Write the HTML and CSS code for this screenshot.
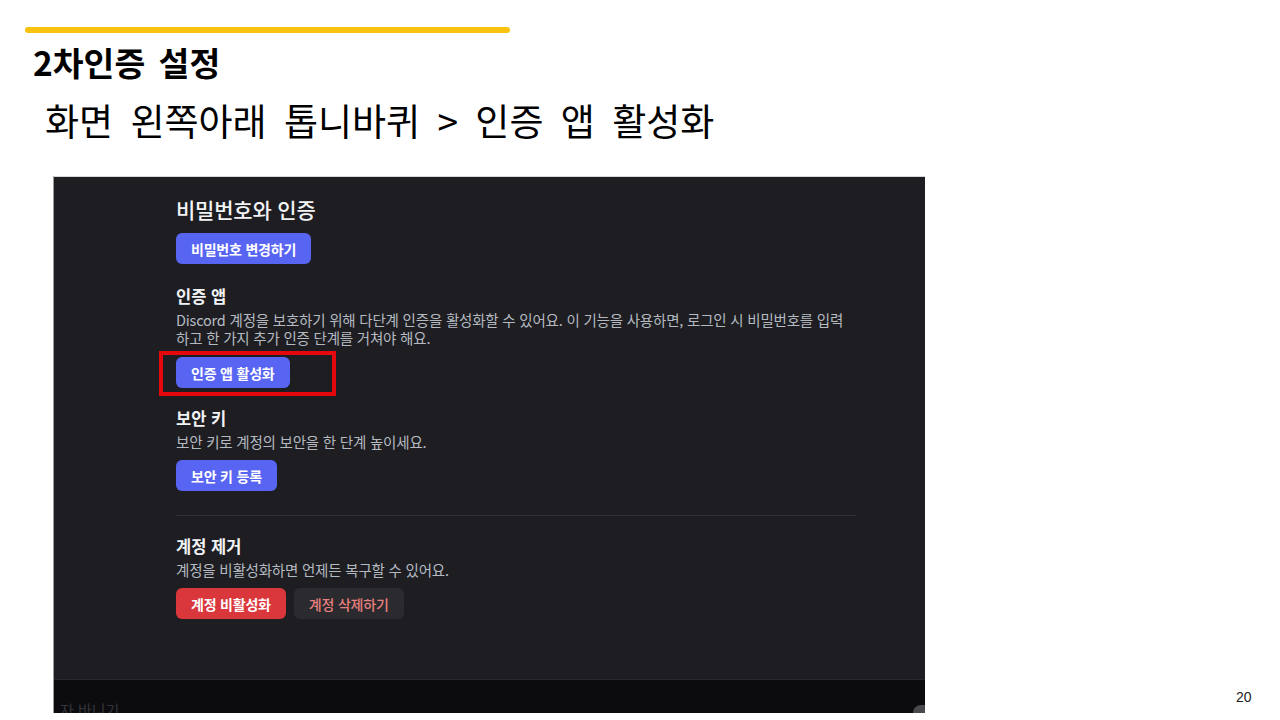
FILE: index.html
```html
<!DOCTYPE html>
<html lang="ko">
<head>
    <meta charset="UTF-8">
    <meta name="viewport" content="width=device-width, initial-scale=1.0">
    <title>2차인증 설정</title>
    <link rel="stylesheet" href="styles.css">
</head>
<body>
    <div class="slide">
        <div class="accent-bar"></div>
        <h1 class="slide-title">2차인증 설정</h1>
        <p class="slide-subtitle">화면 왼쪽아래 톱니바퀴 &gt; 인증 앱 활성화</p>

        <div class="capture">
            <div class="capture-main">
                <div class="settings">
                    <h2 class="settings-title">비밀번호와 인증</h2>
                    <button class="btn btn-brand">비밀번호 변경하기</button>

                    <h3 class="section-title">인증 앱</h3>
                    <p class="section-desc">Discord 계정을 보호하기 위해 다단계 인증을 활성화할 수 있어요. 이 기능을 사용하면, 로그인 시 비밀번호를 입력<br>하고 한 가지 추가 인증 단계를 거쳐야 해요.</p>
                    <div class="highlight">
                        <button class="btn btn-brand">인증 앱 활성화</button>
                    </div>

                    <h3 class="section-title section-title-tight">보안 키</h3>
                    <p class="section-desc">보안 키로 계정의 보안을 한 단계 높이세요.</p>
                    <button class="btn btn-brand">보안 키 등록</button>

                    <div class="divider"></div>

                    <h3 class="section-title">계정 제거</h3>
                    <p class="section-desc">계정을 비활성화하면 언제든 복구할 수 있어요.</p>
                    <div class="btn-row">
                        <button class="btn btn-danger">계정 비활성화</button>
                        <button class="btn btn-ghost">계정 삭제하기</button>
                    </div>
                </div>
            </div>
            <div class="capture-footer">
                <span class="footer-text">자 바니기</span>
                <span class="footer-blob"></span>
            </div>
        </div>

        <span class="page-number">20</span>
    </div>
</body>
</html>
```

FILE: styles.css
```css
* {
    margin: 0;
    padding: 0;
    box-sizing: border-box;
}

body {
    background-color: #fff;
    font-family: "Noto Sans CJK KR", "Noto Sans", sans-serif;
    color: #000;
}

.slide {
    position: relative;
    width: 1280px;
    height: 720px;
    overflow: hidden;
    padding-top: 27px;
}

.accent-bar {
    width: 485px;
    height: 6px;
    margin-left: 25px;
    background-color: #f9c20e;
    border-radius: 3px;
}

.slide-title {
    margin: 9px 0 0 33px;
    font-size: 33.5px;
    font-weight: 700;
    line-height: 40px;
    word-spacing: 4px;
}

.slide-subtitle {
    margin: 15px 0 0 45px;
    font-size: 37px;
    font-weight: 400;
    line-height: 46px;
    word-spacing: 7px;
}

/* screenshot of the discord settings */
.capture {
    display: flex;
    flex-direction: column;
    width: 872px;
    height: 537px;
    margin: 33px 0 0 53px;
    background-color: #1e1e22;
    border-left: 1px solid #9a9a9a;
    border-top: 1px solid #d8d8d8;
}

.capture-main {
    flex: 1;
    padding: 20px 0 0 122px;
}

.settings {
    width: 680px;
    display: flex;
    flex-direction: column;
    align-items: flex-start;
}

.settings-title {
    font-size: 21px;
    font-weight: 500;
    line-height: 24px;
    color: #f2f3f5;
    letter-spacing: -0.2px;
}

.btn {
    height: 31px;
    padding: 0 15px;
    border: none;
    border-radius: 6px;
    font-family: "Noto Sans CJK KR", "Noto Sans", sans-serif;
    font-size: 14px;
    font-weight: 700;
    letter-spacing: -0.2px;
    color: #fff;
}

.settings-title + .btn {
    margin-top: 12px;
}

.btn-brand {
    background-color: #5865f2;
}

.btn-danger {
    background-color: #da373c;
}

.btn-ghost {
    background-color: #2a2a2f;
    color: #e8807d;
    font-weight: 500;
}

.btn-row {
    display: flex;
    gap: 8px;
    margin-top: 9px;
}

.section-title {
    margin-top: 22px;
    font-size: 16.5px;
    font-weight: 700;
    line-height: 20px;
    color: #f2f3f5;
}

.section-title-tight {
    margin-top: 12px;
}

.divider + .section-title {
    margin-top: 20px;
}

.section-desc {
    margin-top: 5px;
    font-size: 14.5px;
    line-height: 18px;
    color: #b5bac1;
    letter-spacing: -0.2px;
}

.section-desc + .btn {
    margin-top: 9px;
}

.highlight {
    margin: 4px 0 0 -17px;
    padding: 2px 42px 4px 13px;
    border: 4px solid #e4070e;
}

.divider {
    width: 680px;
    height: 1px;
    margin-top: 24px;
    background-color: #2e2e34;
}

.capture-footer {
    position: relative;
    height: 34px;
    overflow: hidden;
    background-color: #0c0c0e;
    border-top: 1px solid #2a2a2e;
}

.footer-text {
    position: absolute;
    left: 6px;
    top: 20px;
    font-size: 15px;
    line-height: 20px;
    color: #34343a;
}

.footer-blob {
    position: absolute;
    right: 0;
    bottom: 0;
    width: 12px;
    height: 8px;
    border-radius: 8px 0 0 0;
    background-color: #4a4a4e;
}

.page-number {
    position: absolute;
    left: 1236px;
    top: 689px;
    font-family: "Liberation Sans", sans-serif;
    font-size: 14px;
    color: #222;
}
```
